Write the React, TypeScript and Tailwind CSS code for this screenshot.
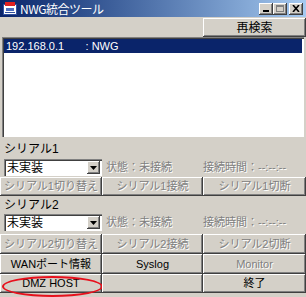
import React from 'react'

const raised =
  'bg-[#d4d0c8] shadow-[inset_-1px_-1px_0_#404040,inset_1px_1px_0_#ffffff,inset_-2px_-2px_0_#808080]'
const disabledText = 'text-[#808080] [text-shadow:1px_1px_0_#ffffff]'

function Btn({
  label,
  disabled,
  w,
  children,
}: {
  label?: string
  disabled?: boolean
  w: string
  children?: React.ReactNode
}) {
  return (
    <div
      className={`${raised} ${w} h-full flex items-center justify-center relative whitespace-nowrap ${
        disabled ? disabledText : 'text-black'
      }`}
    >
      {label}
      {children}
    </div>
  )
}

function TitleBtn({ children }: { children: React.ReactNode }) {
  return (
    <div
      className={`${raised} w-[14px] h-[12px] flex items-center justify-center text-black text-[10px] leading-none font-bold`}
    >
      {children}
    </div>
  )
}

function Combo() {
  return (
    <div className="ml-[4px] w-[98px] h-[17px] bg-white flex items-center shadow-[inset_1px_1px_0_#808080,inset_2px_2px_0_#404040,inset_-1px_-1px_0_#ffffff] p-[2px]">
      <span className="flex-1 pl-[1px] text-black leading-none text-[12px]">未実装</span>
      <div className={`${raised} w-[13px] h-[13px] flex items-center justify-center`}>
        <svg width="7" height="4" viewBox="0 0 7 4">
          <path d="M0 0h7L3.5 4z" fill="#000" />
        </svg>
      </div>
    </div>
  )
}

function StatusRow() {
  return (
    <div className="h-[17px] shrink-0 flex items-center whitespace-nowrap">
      <Combo />
      <span className={`ml-[4px] w-[97px] ${disabledText}`}>状態：未接続</span>
      <span className={`${disabledText}`}>接続時間：--:--:--</span>
    </div>
  )
}

export default function App() {
  return (
    <div className="w-[306px] h-[297px] bg-[#d4d0c8] flex flex-col text-[11px] leading-none font-['Liberation_Sans','Noto_Sans_CJK_JP',sans-serif] overflow-hidden">
      {/* TITLE BAR */}
      <div className="h-[17px] shrink-0 bg-gradient-to-r from-[#0a246a] to-[#a6caf0] flex items-center pl-[3px] pr-[3px]">
        <svg width="14" height="13" viewBox="0 0 14 13">
          <rect x="0.5" y="2.5" width="13" height="10" fill="#fff" stroke="#3050a0" />
          <rect x="2" y="0" width="10" height="4" fill="#e02020" />
          <rect x="3" y="6" width="8" height="3" fill="#5070c0" />
          <rect x="2" y="10" width="10" height="1" fill="#3050a0" />
        </svg>
        <span className="ml-[3px] text-white font-['Noto_Sans_CJK_JP',sans-serif] text-[12px] tracking-[-0.5px]">
          NWG統合ツール
        </span>
        <div className="ml-auto flex items-center">
          <TitleBtn>
            <span className="block w-[6px] h-[2px] bg-black mt-[5px]" />
          </TitleBtn>
          <TitleBtn>
            <span className="block w-[8px] h-[7px] border border-t-2 border-[#808080]" />
          </TitleBtn>
          <div className="w-[2px]" />
          <TitleBtn>
            <svg width="8" height="7" viewBox="0 0 8 7">
              <path d="M1 0L7 7M7 0L1 7" stroke="#000" strokeWidth="1.6" />
            </svg>
          </TitleBtn>
        </div>
      </div>

      {/* RESCAN */}
      <div className="h-[20px] shrink-0 flex justify-end pt-[1px] text-[12px]">
        <Btn label="再検索" w="w-[103px]" />
      </div>

      {/* LIST */}
      <div className="mx-[2px] h-[100px] shrink-0 bg-white shadow-[inset_1px_1px_0_#808080,inset_2px_2px_0_#404040,inset_-1px_-1px_0_#ffffff] p-[2px]">
        <div className="h-[14px] bg-[#0a246a] text-white flex items-center pl-[2px] whitespace-pre">
          192.168.0.1{'       '}: NWG
        </div>
      </div>

      {/* SERIAL 1 */}
      <div className="h-[22px] shrink-0 flex items-center pl-[4px] pt-[1px] text-black text-[12px]">シリアル1</div>
      <StatusRow />
      <div className="h-[19px] shrink-0 flex mt-[1px]">
        <Btn label="シリアル1切り替え" disabled w="w-[102px]" />
        <Btn label="シリアル1接続" disabled w="w-[101px]" />
        <Btn label="シリアル1切断" disabled w="w-[103px]" />
      </div>

      {/* SERIAL 2 */}
      <div className="h-[18px] shrink-0 flex items-center pl-[4px] text-black text-[12px]">シリアル2</div>
      <StatusRow />
      <div className="h-[20px] shrink-0 flex mt-[3px]">
        <Btn label="シリアル2切り替え" disabled w="w-[102px]" />
        <Btn label="シリアル2接続" disabled w="w-[101px]" />
        <Btn label="シリアル2切断" disabled w="w-[103px]" />
      </div>

      {/* TOOLS */}
      <div className="h-[20px] shrink-0 flex">
        <Btn label="WANポート情報" w="w-[102px]" />
        <Btn label="Syslog" w="w-[101px]" />
        <Btn label="Monitor" disabled w="w-[103px]" />
      </div>
      <div className="h-[19px] shrink-0 flex">
        <Btn label="DMZ HOST" w="w-[102px]">
          <div className="absolute left-[2px] top-[2px] w-[101px] h-[21px] border-2 border-[#e8101c] rounded-[50%]" />
        </Btn>
        <Btn w="w-[101px]" />
        <Btn label="終了" w="w-[103px]" />
      </div>
    </div>
  )
}
